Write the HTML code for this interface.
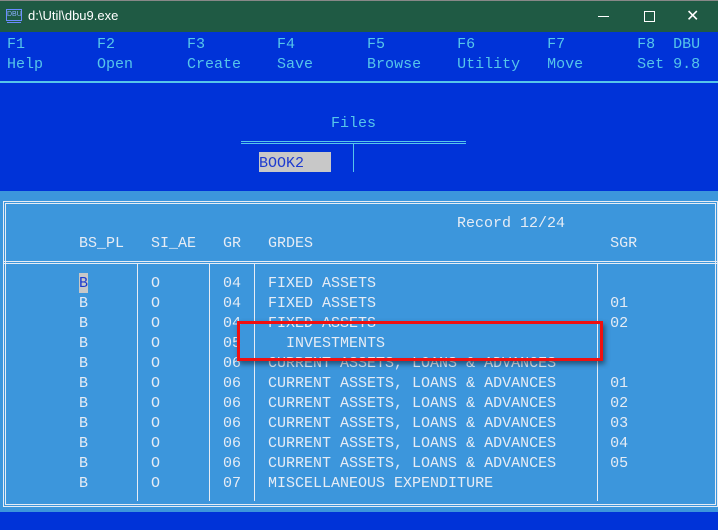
<!DOCTYPE html>
<html><head><style>
body{margin:0;width:718px;height:530px;overflow:hidden;background:#3c96dc;position:relative;font-family:"Liberation Mono",monospace;font-size:15px}
div,span{position:absolute}
.t{line-height:20px;white-space:pre;color:#e6ecf5}
.c{color:#56c6ea}
</style></head><body>
<div style="left:0;top:0;width:718px;height:32px;background:#1f5a44;border-top:1px solid #888;box-sizing:border-box"></div>
<div style="left:6px;top:9px;width:14px;height:10px;border:1px solid #6a8cff;font:7px 'Liberation Sans';color:#8ab0ff;line-height:10px;text-align:center">DBU</div>
<div style="left:7px;top:22px;width:14px;height:1px;background:#6a8cff"></div>
<div class="t" style="left:28px;top:6px;font:13px 'Liberation Sans',sans-serif;color:#fff;line-height:20px">d:\Util\dbu9.exe</div>
<div style="left:598px;top:16px;width:11px;height:1px;background:#fff"></div>
<div style="left:644px;top:11px;width:9px;height:9px;border:1px solid #fff"></div>
<div class="t" style="left:686px;top:6px;font:16px 'Liberation Sans';color:#fff">✕</div>
<div style="left:0;top:32px;width:718px;height:159px;background:#0033d8"></div>
<div class="t c" style="left:7px;top:35px">F1        F2        F3        F4        F5        F6        F7        F8  DBU
Help      Open      Create    Save      Browse    Utility   Move      Set 9.8</div>
<div style="left:0;top:81px;width:718px;height:2px;background:#56c6ea"></div>
<div class="t c" style="left:331px;top:114px">Files</div>
<div style="left:241px;top:141px;width:225px;height:1px;background:#56c6ea"></div>
<div style="left:241px;top:143px;width:225px;height:1px;background:#56c6ea"></div>
<div style="left:353px;top:144px;width:1px;height:28px;background:#56c6ea"></div>
<div style="left:259px;top:152px;width:72px;height:20px;background:#c8c8c8"></div>
<div class="t" style="left:259px;top:154px;color:#1c3ad0">BOOK2</div>
<div style="left:0;top:512px;width:718px;height:18px;background:#0033d8"></div>
<div style="left:3px;top:201px;width:709px;height:300px;border:3px double #e6ecf5"></div>
<div style="left:3px;top:261px;width:715px;height:3px;border-top:3px double #e6ecf5"></div>
<div style="left:137px;top:264px;width:1px;height:237px;background:#e6ecf5"></div>
<div style="left:209px;top:264px;width:1px;height:237px;background:#e6ecf5"></div>
<div style="left:254px;top:264px;width:1px;height:237px;background:#e6ecf5"></div>
<div style="left:597px;top:264px;width:1px;height:237px;background:#e6ecf5"></div>
<div class="t" style="left:457px;top:214px">Record 12/24</div>
<div class="t" style="left:79px;top:234px">BS_PL   SI_AE   GR   GRDES                                 SGR</div>
<div style="left:79px;top:273px;width:9px;height:20px;background:#c8c8c8"></div>
<div class="t" style="left:79px;top:274px;color:#1c3ad0">B</div>
<div class="t" style="left:79px;top:274px">        O       04   FIXED ASSETS
B       O       04   FIXED ASSETS                          01
B       O       04   FIXED ASSETS                          02
B       O       05     INVESTMENTS
B       O       06   CURRENT ASSETS, LOANS &amp; ADVANCES      
B       O       06   CURRENT ASSETS, LOANS &amp; ADVANCES      01
B       O       06   CURRENT ASSETS, LOANS &amp; ADVANCES      02
B       O       06   CURRENT ASSETS, LOANS &amp; ADVANCES      03
B       O       06   CURRENT ASSETS, LOANS &amp; ADVANCES      04
B       O       06   CURRENT ASSETS, LOANS &amp; ADVANCES      05
B       O       07   MISCELLANEOUS EXPENDITURE</div>
<div style="left:237px;top:321px;width:360px;height:34px;border:3px solid #f01010;box-shadow:2px 3px 5px rgba(0,0,0,.45)"></div>
</body></html>
